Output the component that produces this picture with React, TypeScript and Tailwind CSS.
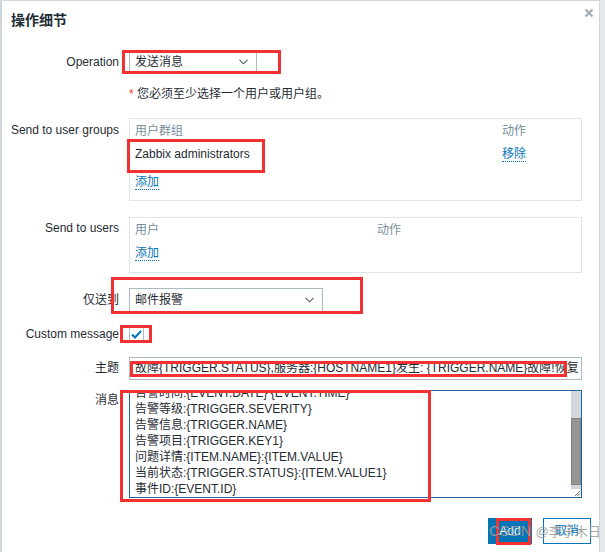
import React from "react";

const font = "font-['Liberation_Sans','Noto_Sans_CJK_SC',sans-serif]";

function Chevron() {
  return (
    <svg width="9" height="6" viewBox="0 0 9 6" className="shrink-0">
      <polyline points="0.5,0.8 4.5,4.8 8.5,0.8" fill="none" stroke="#4f5b62" strokeWidth="1.1" />
    </svg>
  );
}

function Select({ value, width }: { value: string; width: string }) {
  return (
    <div className={`${width} h-full flex items-center justify-between pl-[5px] pr-[8px] border border-[#acbbc2] bg-white`}>
      <span>{value}</span>
      <Chevron />
    </div>
  );
}

function LinkText({ children }: { children: React.ReactNode }) {
  return (
    <span className="text-[#0275b8] leading-[14px] border-b border-dotted border-[#0275b8]">{children}</span>
  );
}

function Label({ children, className = "" }: { children: React.ReactNode; className?: string }) {
  return <div className={`text-right ${className}`}>{children}</div>;
}

const message = [
  "告警时间:{EVENT.DATE} {EVENT.TIME}",
  "告警等级:{TRIGGER.SEVERITY}",
  "告警信息:{TRIGGER.NAME}",
  "告警项目:{TRIGGER.KEY1}",
  "问题详情:{ITEM.NAME}:{ITEM.VALUE}",
  "当前状态:{TRIGGER.STATUS}:{ITEM.VALUE1}",
  "事件ID:{EVENT.ID}",
];

// red annotation boxes drawn on top of the screenshot
const marks = [
  "left-[122px] top-[50px] w-[159px] h-[24px]",
  "left-[127px] top-[139px] w-[138px] h-[34px]",
  "left-[111px] top-[277px] w-[252px] h-[37px]",
  "left-[120px] top-[325px] w-[32px] h-[18px]",
  "left-[130px] top-[361px] w-[437px] h-[16px]",
  "left-[120px] top-[390px] w-[311px] h-[112px]",
  "left-[496px] top-[518px] w-[35px] h-[27px]",
];

export default function App() {
  return (
    <div className={`relative w-[605px] h-[552px] overflow-hidden bg-[#e6e9ec] text-[12px] text-[#1f2c33] ${font}`}>
      <div className="w-[600px] h-[560px] bg-white border-l-2 border-t border-r border-[#cfd6db]">
        {/* header */}
        <div className="h-[50px] flex justify-between items-start pl-[9px] pr-[5px]">
          <div className="mt-[9px] leading-[20px] text-[14px] font-bold">操作细节</div>
          <svg width="10" height="10" viewBox="0 0 10 10" className="mt-[7px]">
            <path d="M1.5 1.5 L8.5 8.5 M8.5 1.5 L1.5 8.5" stroke="#a3b0b7" strokeWidth="2.4" />
          </svg>
        </div>

        <div className="grid grid-cols-[117px_453px] gap-x-[10px]">
          {/* Operation */}
          <Label className="leading-[22px]">Operation</Label>
          <div className="h-[22px]">
            <Select value="发送消息" width="w-[128px]" />
          </div>

          {/* note */}
          <div />
          <div className="mt-[14px] leading-[14px]">
            <span className="text-[#e33734]">*</span> 您必须至少选择一个用户或用户组。
          </div>

          {/* user groups */}
          <Label className="mt-[17px] pt-[4px] leading-[16px]">Send to user groups</Label>
          <div className="mt-[17px] h-[83px] border border-[#e0e5e8] pl-[5px] pt-[4px]">
            <div className="flex h-[16px] leading-[16px] text-[#768d99]">
              <div className="w-[367px]">用户群组</div>
              <div>动作</div>
            </div>
            <div className="flex h-[30px] items-center">
              <div className="w-[367px]">Zabbix administrators</div>
              <LinkText>移除</LinkText>
            </div>
            <div className="flex h-[26px] items-center">
              <LinkText>添加</LinkText>
            </div>
          </div>

          {/* users */}
          <Label className="mt-[16px] pt-[3px] leading-[16px]">Send to users</Label>
          <div className="mt-[16px] h-[56px] border border-[#e0e5e8] pl-[5px] pt-[4px]">
            <div className="flex h-[16px] leading-[16px] text-[#768d99]">
              <div className="w-[242px]">用户</div>
              <div>动作</div>
            </div>
            <div className="flex h-[30px] items-center">
              <LinkText>添加</LinkText>
            </div>
          </div>

          {/* only send to */}
          <Label className="mt-[15px] leading-[24px]">仅送到</Label>
          <div className="mt-[15px] h-[24px]">
            <Select value="邮件报警" width="w-[194px]" />
          </div>

          {/* custom message */}
          <Label className="mt-[14px] leading-[16px]">Custom message</Label>
          <div className="mt-[14px] h-[16px] flex items-center">
            <div className="w-[15px] h-[15px] border border-[#acbbc2] flex items-center justify-center">
              <svg width="11" height="9" viewBox="0 0 11 9">
                <polyline points="1,4.5 4,7.5 10,1" fill="none" stroke="#0275b8" strokeWidth="2" />
              </svg>
            </div>
          </div>

          {/* subject */}
          <Label className="mt-[15px] leading-[23px]">主题</Label>
          <div className="mt-[15px] h-[23px] border border-[#acbbc2] pl-[5px] leading-[21px] whitespace-nowrap overflow-hidden">
            故障{"{TRIGGER.STATUS}"},服务器:{"{HOSTNAME1}"}发生: {"{TRIGGER.NAME}"}故障!恢复
          </div>

          {/* message */}
          <Label className="mt-[10px] pt-[2px] leading-[16px]">消息</Label>
          <div className="mt-[10px] h-[108px] border border-[#21659e] flex overflow-hidden">
            <div className="flex-1 pl-[5px] overflow-hidden">
              <div className="mt-[-6px] leading-[16px]">
                {message.map((line) => (
                  <div key={line}>{line}</div>
                ))}
              </div>
            </div>
            <div className="w-[10px] flex flex-col">
              <div className="h-[27px] bg-[#d2d8dc]" />
              <div className="h-[67px] bg-[#969696] border border-[#7f7f7f]" />
              <div className="h-[4px] bg-[#d2d8dc]" />
              <div className="flex-1 bg-white flex items-end justify-end">
                <svg width="7" height="7" viewBox="0 0 7 7">
                  <path d="M6 1 L1 6 M6 3.5 L3.5 6" stroke="#7a7a7a" strokeWidth="1" />
                </svg>
              </div>
            </div>
          </div>
        </div>

        {/* buttons */}
        <div className="mt-[20px] flex justify-end gap-[11px] pr-[8px]">
          <div className="w-[44px] h-[26px] bg-[#0275b8] text-white text-center leading-[26px]">Add</div>
          <div className="w-[48px] h-[26px] border border-[#0275b8] text-[#0275b8] text-center leading-[24px]">取消</div>
        </div>
      </div>

      {marks.map((m) => (
        <div key={m} className={`absolute ${m} border-[3px] border-[#f23232]`} />
      ))}

      <div className="absolute left-[489px] top-[522px] flex items-baseline gap-[4px] leading-[18px] text-[#9a9a9a]/90 whitespace-nowrap">
        <span className="text-[15px]">CSDN</span>
        <span className="text-[13px]">@李子木日</span>
      </div>
    </div>
  );
}
